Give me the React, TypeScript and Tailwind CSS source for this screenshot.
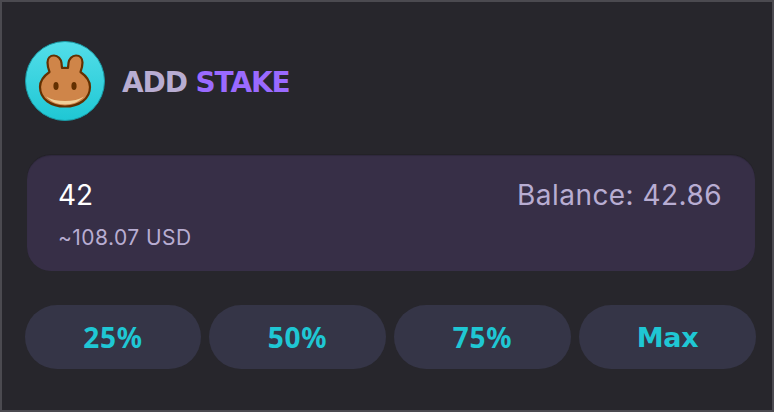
function BunnyLogo() {
  return (
    <svg width="80" height="80" viewBox="0 0 80 80" className="shrink-0">
      <defs>
        <linearGradient id="disc" x1="0" y1="0" x2="0" y2="1">
          <stop offset="0" stopColor="#53dee9" />
          <stop offset="1" stopColor="#1fc7d4" />
        </linearGradient>
      </defs>
      <circle cx="40" cy="40" r="39.500" fill="url(#disc)" stroke="#1a9ba6" strokeWidth="1" />
      <path
        d="M24.500 31C23 27 22.500 24 22.500 21.500C22.500 17.500 25 14.500 29 14.500C33 14.500 36 18 36.500 22L37 27C38.800 26.800 41 26.800 43 27L43.500 22C44 18 47 14.500 51 14.500C55 14.500 57.500 17.500 57.500 21.500C57.500 24 57 27 55.500 31C60.500 34.500 65 39.500 65 46C65 58 54 65.500 40 65.500C26 65.500 15 58 15 46C15 39.500 19.500 34.500 24.500 31Z"
        fill="#cf8549"
        stroke="#633001"
        strokeWidth="2.200"
        strokeLinejoin="round"
      />
      <path d="M21 55.500C25.500 60.500 32 63.500 40 63.500C48 63.500 54.500 60.500 59 55.500C54 58.500 48 60 40 60C32 60 26 58.500 21 55.500Z" fill="#f0cf98" />
      <ellipse cx="31" cy="45" rx="2.600" ry="4" fill="#633001" />
      <ellipse cx="49" cy="45" rx="2.600" ry="4" fill="#633001" />
    </svg>
  );
}

export default function App() {
  return (
    <div className="w-[774px] h-[412px] bg-[#27262c] border-2 border-[#4b4a50] pl-[23px] pr-[16px] pt-[39px] font-['Inter',sans-serif]">
      {/* Header */}
      <div className="flex items-center gap-[17px]">
        <BunnyLogo />
        <h2 className="mt-[4px] font-['DejaVu_Sans',sans-serif] font-bold text-[28px] tracking-[-1.100px] leading-none text-[#b8add2]">
          ADD <span className="text-[#9a6aff]">STAKE</span>
        </h2>
      </div>

      {/* Amount card */}
      <div className="mt-[34px] ml-[2px] mr-[1px] h-[116px] rounded-[24px] bg-[#372f47] shadow-[inset_0_1px_1px_rgba(0,0,0,0.15),0_-1px_0_rgba(0,0,0,0.1)] pl-[31px] pr-[33px] pt-[21px]">
        <div className="flex items-center justify-between h-[38px]">
          <span className="text-[28px] leading-none text-white">42</span>
          <span className="text-[28px] tracking-[0.450px] leading-none text-[#b8add2]">Balance: 42.86</span>
        </div>
        <div className="mt-[10px] text-[21px] tracking-[0.450px] leading-[28px] text-[#b8add2]">~108.07 USD</div>
      </div>

      {/* Percent buttons */}
      <div className="mt-[34px] flex gap-[8px]">
        {['25%', '50%', '75%', 'Max'].map((label) => (
          <button
            key={label}
            className={`h-[64px] rounded-[32px] bg-[#353547] text-[#1fc7d4] flex items-center justify-center ${
              label === '25%' ? 'w-[176px] flex-none' : 'flex-1'
            } ${
              label === 'Max'
                ? "pt-[2px] font-['DejaVu_Sans',sans-serif] font-bold text-[27px] tracking-[-0.400px]"
                : "font-['Noto_Sans',sans-serif] font-bold text-[28px] tracking-[0.800px]"
            }`}
          >
            {label}
          </button>
        ))}
      </div>
    </div>
  );
}
